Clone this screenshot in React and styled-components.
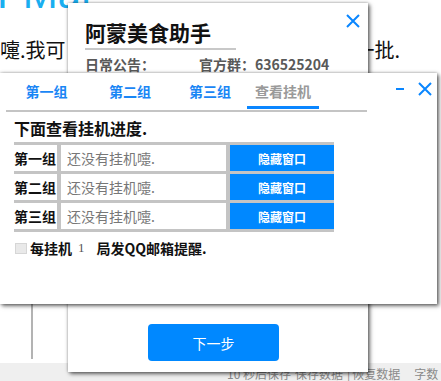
import React from 'react';
import styled, { createGlobalStyle } from 'styled-components';

const GlobalStyle = createGlobalStyle`
  html, body {
    margin: 0;
    padding: 0;
    background: #fff;
    overflow: hidden;
  }
  body {
    font-family: "Noto Sans CJK SC", "Noto Sans", sans-serif;
  }
`;

const Desktop = styled.div`
  position: relative;
  width: 441px;
  height: 381px;
  overflow: hidden;
  background: #fff;
  display: flex;
  flex-direction: column;
`;

/* only the lower edge of the big page heading is still in view */
const Brand = styled.div`
  height: 11px;
  overflow: hidden;
  font-family: "Liberation Sans", Arial, sans-serif;
  font-size: 42px;
  line-height: 12px;
  margin: 0 0 0 -3px;
  color: #1aaef0;
  white-space: nowrap;
  & > span {
    display: block;
    margin-top: -12px;
  }
`;

const Intro = styled.div`
  display: flex;
  justify-content: space-between;
  width: 400px;
  margin-top: 27px;
  font-size: 20px;
  line-height: 24px;
  color: #111;
  white-space: nowrap;
`;

const Editor = styled.div`
  flex: 1;
  margin: 12px 0 4px 31px;
  border-left: 2px solid #b3b3b3;
`;

const StatusBar = styled.div`
  height: 18px;
  box-sizing: border-box;
  padding: 3px 0 0 227px;
  background: #efefef;
  color: #8a8a8a;
  font-size: 12px;
  line-height: 16px;
  white-space: nowrap;
`;

const StatusItem = styled.span`
  margin-right: ${(p) => p.$gap || 4}px;
`;

/* windows on the desktop */
const Window = styled.div`
  position: absolute;
  left: ${(p) => p.$left}px;
  top: ${(p) => p.$top}px;
  width: ${(p) => p.$width}px;
  height: ${(p) => p.$height}px;
  background: #fff;
  box-shadow: 2px 2px 4px rgba(0, 0, 0, 0.55), 0 0 3px rgba(0, 0, 0, 0.35);
  display: flex;
  flex-direction: column;
`;

const Header = styled.div`
  display: flex;
  align-items: flex-start;
  padding: ${(p) => p.$pad || '0'};
`;

const Title = styled.div`
  margin-top: 16px;
  width: 151px;
  padding-bottom: 3px;
  border-bottom: 2px solid #c8c8c8;
  font-size: 21px;
  font-weight: 700;
  line-height: 26px;
  color: #111;
`;

const Controls = styled.div`
  margin-left: auto;
  margin-top: ${(p) => p.$top}px;
  display: flex;
  gap: 11px;
`;

const Notice = styled.div`
  display: flex;
  padding-left: 17px;
  margin-top: 5px;
  font-size: 14px;
  font-weight: 700;
  line-height: 18px;
  color: #595959;
`;

const NoticeLabel = styled.span`
  width: 114px;
`;

const Spacer = styled.div`
  flex: 1;
`;

const NextButton = styled.button`
  margin: 0 0 11px 80px;
  width: 131px;
  height: 37px;
  border: none;
  border-radius: 4px;
  background: #0088ff;
  color: #fff;
  font-family: inherit;
  font-size: 14px;
  padding: 0;
`;

const TabBar = styled.div`
  margin: 8px 0 0 6px;
  width: 361px;
  display: grid;
  grid-template-columns: 81px 86px 74px 72px;
  padding-bottom: 1px;
  border-bottom: 2px solid #c4c4c4;
`;

const Tab = styled.div`
  font-size: 14px;
  font-weight: 700;
  line-height: 20px;
  padding-bottom: 5px;
  text-align: center;
  color: ${(p) => (p.$active ? '#9a9a9a' : '#1a86f5')};
  border-bottom: 3px solid ${(p) => (p.$active ? '#0a86ff' : 'transparent')};
`;

const Body = styled.div`
  padding: 6px 0 0 14px;
`;

const Heading = styled.div`
  font-size: 16px;
  font-weight: 700;
  line-height: 20px;
  color: #111;
`;

const Table = styled.div`
  margin-top: 4px;
  width: 320px;
  display: grid;
  grid-template-columns: 43px 165px 104px;
  grid-auto-rows: 26px;
  column-gap: 4px;
  row-gap: 3px;
  padding: 3px 0;
  background: #c4c4c4;
`;

const GroupCell = styled.div`
  background: #fff;
  font-size: 14px;
  font-weight: 700;
  line-height: 26px;
  color: #111;
  white-space: nowrap;
`;

const StateCell = styled.div`
  background: #fff;
  padding-left: 6px;
  font-size: 14px;
  line-height: 26px;
  color: #777;
  white-space: nowrap;
`;

const HideButton = styled.button`
  border: none;
  padding: 0;
  background: #0088ff;
  color: #fff;
  font-family: inherit;
  font-size: 12px;
  font-weight: 700;
`;

const OptionRow = styled.div`
  margin-top: 6px;
  display: flex;
  align-items: center;
  height: 20px;
  font-size: 14px;
  font-weight: 700;
  color: #111;
  white-space: nowrap;
`;

const Check = styled.span`
  width: 12px;
  height: 11px;
  box-sizing: border-box;
  margin: 0 3px 0 1px;
  background: #e9e9e9;
  border: 1px solid #d6d6d6;
`;

const Count = styled.span`
  margin: 0 12px 0 6px;
  font-family: "Liberation Serif", serif;
  font-size: 13px;
  font-weight: 400;
  color: #555;
`;

const Cross = () => (
  <svg width="14" height="14" viewBox="0 0 14 14">
    <path d="M1 1 L13 13 M13 1 L1 13" stroke="#0a86ff" strokeWidth="2" fill="none" />
  </svg>
);

const Minus = () => (
  <svg width="14" height="14" viewBox="0 0 14 14">
    <path d="M3 7 H11" stroke="#0a86ff" strokeWidth="2" fill="none" />
  </svg>
);

const groups = ['第一组', '第二组', '第三组'];

export default function App() {
  return (
    <>
      <GlobalStyle />
      <Desktop>
        <Brand>
          <span>FMat</span>
        </Brand>
        <Intro>
          <span>嚏.我可</span>
          <span>一批.</span>
        </Intro>
        <Editor />
        <StatusBar>
          <StatusItem $gap={4}>10 秒后保存</StatusItem>
          <StatusItem $gap={4}>保存数据</StatusItem>
          <StatusItem $gap={2}>|</StatusItem>
          <StatusItem $gap={14}>恢复数据</StatusItem>
          <StatusItem>字数</StatusItem>
        </StatusBar>

        <Window $left={68} $top={3} $width={300} $height={369}>
          <Header $pad="0 8px 0 17px">
            <Title>阿蒙美食助手</Title>
            <Controls $top={11}>
              <Cross />
            </Controls>
          </Header>
          <Notice>
            <NoticeLabel>日常公告：</NoticeLabel>
            <span>官方群：636525204</span>
          </Notice>
          <Spacer />
          <NextButton>下一步</NextButton>
        </Window>

        <Window $left={0} $top={73} $width={437} $height={231}>
          <Header $pad="0 5px 0 0">
            <TabBar>
              <Tab>第一组</Tab>
              <Tab>第二组</Tab>
              <Tab>第三组</Tab>
              <Tab $active>查看挂机</Tab>
            </TabBar>
            <Controls $top={9}>
              <Minus />
              <Cross />
            </Controls>
          </Header>
          <Body>
            <Heading>下面查看挂机进度.</Heading>
            <Table>
              {groups.map((g) => (
                <React.Fragment key={g}>
                  <GroupCell>{g}</GroupCell>
                  <StateCell>还没有挂机嚏.</StateCell>
                  <HideButton>隐藏窗口</HideButton>
                </React.Fragment>
              ))}
            </Table>
            <OptionRow>
              <Check />
              每挂机
              <Count>1</Count>
              局发QQ邮箱提醒.
            </OptionRow>
          </Body>
        </Window>
      </Desktop>
    </>
  );
}
